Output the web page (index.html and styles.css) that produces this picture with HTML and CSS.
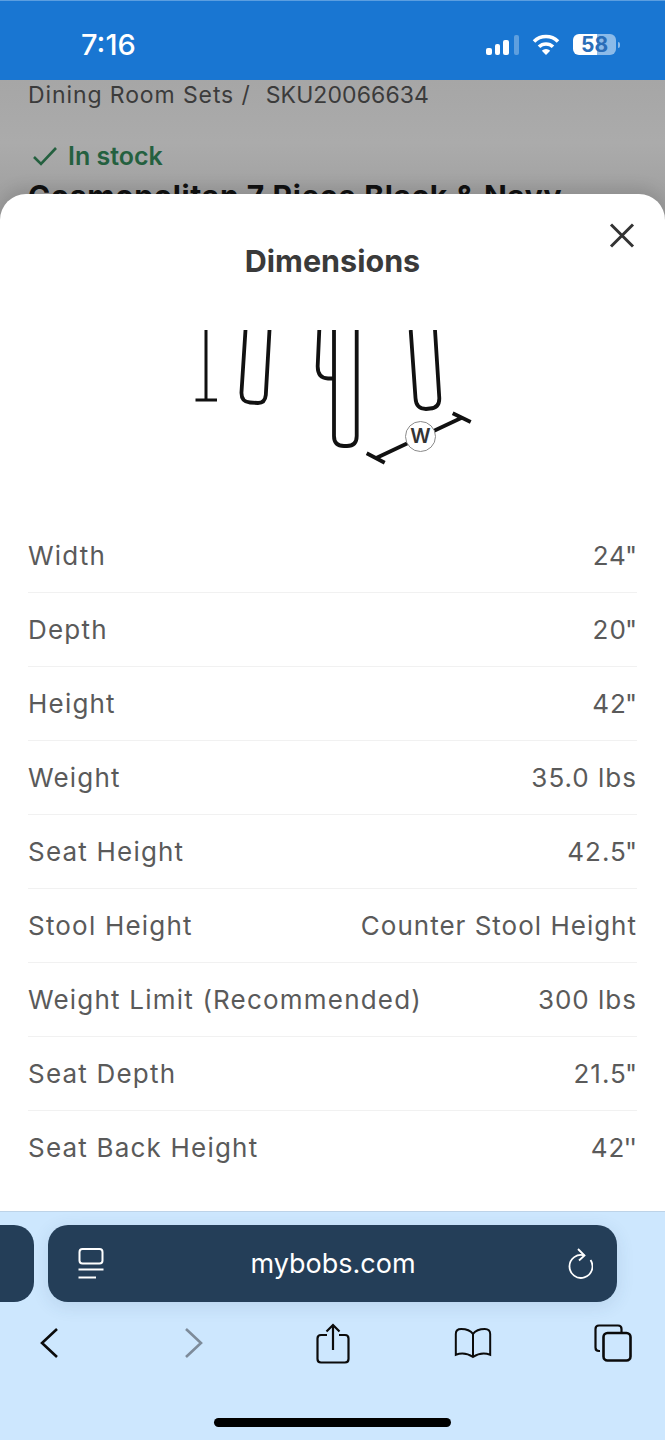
FILE: index.html
```html
<!DOCTYPE html>
<html lang="en">
<head>
    <meta charset="UTF-8" />
    <meta name="viewport" content="width=device-width, initial-scale=1" />
    <title>Dimensions - mybobs.com</title>
    <link rel="stylesheet" href="styles.css">
</head>
<body>

    <header class="status-bar">
        <span class="status-time">7:16</span>
        <div class="status-icons">
            <div class="signal">
                <span class="bar bar-1"></span>
                <span class="bar bar-2"></span>
                <span class="bar bar-3"></span>
                <span class="bar bar-4"></span>
            </div>
            <svg class="wifi" width="28" height="21" viewBox="0 0 28 21">
                <path d="M2 7.5A17 17 0 0 1 26 7.5" fill="none" stroke="#fff" stroke-width="3.6" />
                <path d="M7 12.8A10 10 0 0 1 21 12.8" fill="none" stroke="#fff" stroke-width="3.6" />
                <path d="M9.8 16.8A6 6 0 0 1 18.2 16.8L14 21Z" fill="#fff" />
            </svg>
            <div class="battery">58</div>
            <span class="battery-tip"></span>
        </div>
    </header>

    <!-- page behind the sheet -->
    <div class="backdrop">
        <div class="crumbs"><span class="crumb-name">Dining Room Sets /</span><span class="crumb-sku">SKU20066634</span></div>
        <div class="stock">
            <svg width="26" height="20" viewBox="0 0 26 20">
                <path d="M2 11L9 18L24 2" fill="none" stroke="#24603f" stroke-width="2.6" />
            </svg>
            <span>In stock</span>
        </div>
        <div class="product-name">Cosmopolitan 7 Piece Black &amp; Navy</div>
    </div>

    <main class="sheet">
        <button class="close-btn" aria-label="Close">
            <svg width="26" height="25" viewBox="0 0 26 25">
                <path d="M2 1.5L24 23.5M24 1.5L2 23.5" stroke="#333" stroke-width="3" fill="none" />
            </svg>
        </button>

        <h1 class="sheet-title">Dimensions</h1>

        <svg class="diagram" width="300" height="150" viewBox="180 330 300 150">
            <g fill="none" stroke="#111" stroke-width="3.8">
                <path d="M206 330V400M195.500 400H217" stroke-width="3" />
                <path d="M245.500 330L241.500 392Q241 402 250 402.500L258 403Q265 403 265.800 395L269.500 330" />
                <path d="M319.300 330L317.700 366Q317.500 378 328 378.500H335" />
                <path d="M334 330V436Q334 446 344 446H347Q356.700 446 356.700 436V330" />
                <path d="M410.700 330L415.500 398Q416 409 426 409L430 408.500Q439.500 408 439.300 398L435 330" />
                <path d="M375.700 458.300L461.700 417.700M366.700 453.300L384.700 462.700M452.700 413.300L470.700 422" />
            </g>
        </svg>
        <div class="w-badge">W</div>

        <div class="dim-list">
            <div class="dim-row"><span>Width</span><span class="dim-val">24<span class="inch">"</span></span></div>
            <div class="dim-row"><span>Depth</span><span class="dim-val">20<span class="inch">"</span></span></div>
            <div class="dim-row"><span>Height</span><span class="dim-val">42<span class="inch">"</span></span></div>
            <div class="dim-row"><span>Weight</span><span class="dim-val">35.0 lbs</span></div>
            <div class="dim-row"><span>Seat Height</span><span class="dim-val">42.5<span class="inch">"</span></span></div>
            <div class="dim-row"><span>Stool Height</span><span class="dim-val">Counter Stool Height</span></div>
            <div class="dim-row"><span>Weight Limit (Recommended)</span><span class="dim-val">300 lbs</span></div>
            <div class="dim-row"><span>Seat Depth</span><span class="dim-val">21.5<span class="inch">"</span></span></div>
            <div class="dim-row"><span>Seat Back Height</span><span class="dim-val">42<span class="inch">''</span></span></div>
        </div>
    </main>

    <footer class="browser-bar">
        <div class="url-row">
            <div class="url-stub"></div>
            <div class="url-box">
                <svg width="26" height="31" viewBox="0 0 26 31">
                    <rect x="1.500" y="1" width="23" height="14.500" rx="3" fill="none" stroke="#fff" stroke-width="2" />
                    <path d="M0.500 21.500H25.500M0.500 29.500H18" stroke="#fff" stroke-width="2" fill="none" />
                </svg>
                <span class="url-text">mybobs.com</span>
                <svg width="26" height="31" viewBox="0 0 26 31">
                    <path d="M17.500 7.500A11.500 11.500 0 1 0 23.500 12" fill="none" stroke="#fff" stroke-width="1.800" />
                    <path d="M11 1L17.500 7.500L12 12.500" fill="none" stroke="#fff" stroke-width="1.800" />
                </svg>
            </div>
        </div>

        <nav class="nav-row">
            <div class="nav-cell">
                <svg width="20" height="32" viewBox="0 0 20 32">
                    <path d="M18 2L3 16L18 30" fill="none" stroke="#0b0b0b" stroke-width="2.600" />
                </svg>
            </div>
            <div class="nav-cell nudge-8">
                <svg width="20" height="32" viewBox="0 0 20 32">
                    <path d="M2 2L17 16L2 30" fill="none" stroke="#7d8b9a" stroke-width="2.600" />
                </svg>
            </div>
            <div class="nav-cell nudge-4">
                <svg width="34" height="41" viewBox="0 0 34 41">
                    <path d="M11 12H5Q1.500 12 1.500 15.500V36Q1.500 39.500 5 39.500H29Q32.500 39.500 32.500 36V15.500Q32.500 12 29 12H23" fill="none" stroke="#0b0b0b" stroke-width="2.200" />
                    <path d="M17 27V2M10.500 8.500L17 2L23.500 8.500" fill="none" stroke="#0b0b0b" stroke-width="2.200" />
                </svg>
            </div>
            <div class="nav-cell nudge-2">
                <svg width="42" height="34" viewBox="0 0 42 34">
                    <path d="M21 7Q17 1.500 8 1.500Q2 1.500 2 7V30Q12 26.500 21 32.500Q30 26.500 40 30V7Q40 1.500 34 1.500Q25 1.500 21 7ZM21 7V32" fill="none" stroke="#0b0b0b" stroke-width="2.200" />
                </svg>
            </div>
            <div class="nav-cell">
                <svg width="38" height="38" viewBox="0 0 38 38">
                    <path d="M6 27H5Q1.500 27 1.500 23.500V5Q1.500 1.500 5 1.500H24Q27.500 1.500 27.500 5V8" fill="none" stroke="#0b0b0b" stroke-width="2.200" />
                    <rect x="9.500" y="9" width="27" height="27.500" rx="4" fill="none" stroke="#0b0b0b" stroke-width="2.600" />
                </svg>
            </div>
        </nav>

        <div class="home-bar"></div>
    </footer>

</body>
</html>
```

FILE: styles.css
```css
html, body {
    margin: 0;
    padding: 0;
}

body {
    width: 665px;
    height: 1440px;
    overflow: hidden;
    font-family: 'Inter', 'Liberation Sans', sans-serif;
    background-color: #fff;
}

.status-bar {
    box-sizing: border-box;
    height: 80px;
    display: flex;
    justify-content: space-between;
    align-items: center;
    padding: 8px 45px 0 81px;
    background-color: #1976d2;
    border-top: 1px solid #5b9ee0;
    color: #fff;
    position: relative;
    z-index: 2;
}

.status-time {
    font-size: 29px;
    font-weight: 500;
}

.status-icons {
    display: flex;
    align-items: center;
}

.signal {
    display: flex;
    align-items: flex-end;
    gap: 3px;
    height: 20px;
    margin-right: 13px;
}

.bar {
    width: 5.500px;
    border-radius: 2px;
    background-color: #fff;
}

.bar-1 { height: 7px; }
.bar-2 { height: 11px; }
.bar-3 { height: 15px; }
.bar-4 { height: 20px; margin-left: 2px; background-color: rgba(255, 255, 255, 0.3); }

.wifi {
    margin-right: 13px;
}

.battery {
    width: 43px;
    height: 21px;
    border-radius: 6px;
    background: linear-gradient(90deg, #fff 0 24px, rgba(255, 255, 255, 0.5) 24px);
    color: #2a6db8;
    font-size: 21px;
    font-weight: 700;
    line-height: 21px;
    text-align: center;
}

.battery-tip {
    width: 2px;
    height: 6px;
    margin-left: 2px;
    border-radius: 0 2px 2px 0;
    background-color: rgba(255, 255, 255, 0.5);
}

.backdrop {
    box-sizing: border-box;
    height: 140px;
    padding: 0 28px;
    overflow: hidden;
    background: linear-gradient(180deg, #a6a6a6 0%, #ababab 45%, #9c9c9c 100%);
    color: #3b3b3b;
}

.crumbs {
    font-size: 23px;
    line-height: 30px;
    display: flex;
}

.crumb-name {
    letter-spacing: 0.9px;
}

.crumb-sku {
    margin-left: 15px;
    letter-spacing: 0.1px;
}

.stock {
    display: flex;
    align-items: center;
    gap: 10px;
    margin-top: 30px;
    margin-left: 4px;
    color: #24603f;
    font-size: 25px;
    font-weight: 600;
    line-height: 32px;
}

.product-name {
    margin-top: 6px;
    color: #111;
    font-size: 30px;
    font-weight: 700;
    letter-spacing: 0.6px;
    white-space: nowrap;
}

.sheet {
    position: relative;
    height: 1017px;
    box-sizing: border-box;
    margin-top: -26px;
    padding-top: 47px;
    border-radius: 26px 26px 0 0;
    background-color: #fff;
    box-shadow: 0 -6px 16px rgba(0, 0, 0, 0.12);
}

.close-btn {
    position: absolute;
    top: 29px;
    right: 30px;
    padding: 0;
    border: none;
    background: none;
}

.close-btn svg {
    display: block;
}

.sheet-title {
    margin: 0;
    color: #3a3a3a;
    font-size: 30.500px;
    font-weight: 700;
    line-height: 40px;
    text-align: center;
}

.diagram {
    display: block;
    margin: 49px 0 0 180px;
}

.w-badge {
    position: absolute;
    left: 405px;
    top: 227px;
    box-sizing: border-box;
    width: 31px;
    height: 31px;
    border: 1.500px solid #8a8a8a;
    border-radius: 50%;
    background-color: #fff;
    color: #333;
    font-size: 20px;
    font-weight: 600;
    line-height: 28px;
    text-align: center;
}

.dim-list {
    margin-top: 39px;
    padding: 0 28px;
}

.dim-row {
    box-sizing: border-box;
    height: 74px;
    display: flex;
    justify-content: space-between;
    align-items: center;
    border-bottom: 1px solid #f1f1f1;
    color: #5a5a5a;
    font-size: 26px;
    letter-spacing: 1.200px;
}

.dim-row:last-child {
    border-bottom-color: transparent;
}

.dim-val {
    letter-spacing: 1px;
}

.inch {
    margin-left: -2px;
    margin-right: 2px;
    letter-spacing: -2px;
}

.browser-bar {
    position: relative;
    height: 229px;
    box-sizing: border-box;
    padding-top: 13px;
    background-color: #cde7fe;
    border-top: 1px solid #bdd3e8;
}

.url-row {
    display: flex;
    gap: 14px;
    margin-left: -20px;
}

.url-stub {
    width: 54px;
    height: 77px;
    border-radius: 20px;
    background-color: #243e58;
}

.url-box {
    box-sizing: border-box;
    width: 569px;
    height: 77px;
    display: flex;
    align-items: center;
    justify-content: space-between;
    padding: 0 24px 0 30px;
    border-radius: 20px;
    background-color: #243e58;
    box-shadow: 0 4px 18px rgba(40, 70, 110, 0.12);
}

.url-text {
    margin-right: 5px;
    color: #fff;
    font-size: 27px;
}

.nav-row {
    display: flex;
    justify-content: space-between;
    align-items: center;
    height: 42px;
    margin-top: 20px;
    padding: 0 32px 0 29px;
}

.nav-cell {
    width: 40px;
    display: flex;
    justify-content: center;
}

.nudge-8 { padding-left: 8px; box-sizing: border-box; }
.nudge-4 { padding-left: 4px; box-sizing: border-box; }
.nudge-2 { padding-left: 2px; box-sizing: border-box; }

.home-bar {
    width: 237px;
    height: 9px;
    margin: 54px auto 0;
    border-radius: 5px;
    background-color: #000;
}
```
